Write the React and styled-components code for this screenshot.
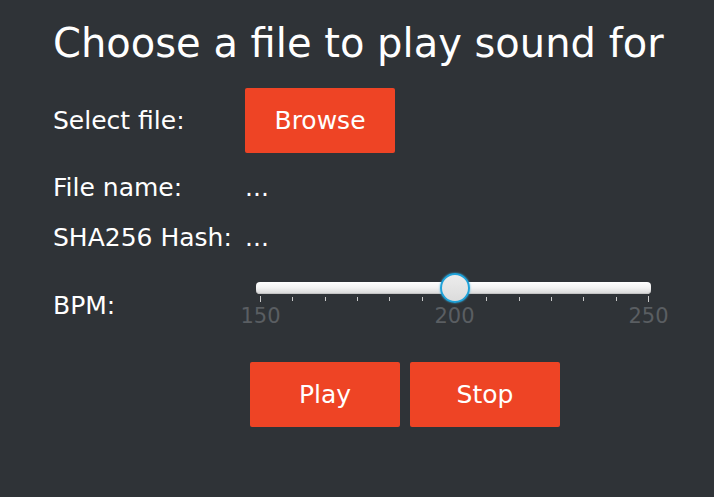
import React, { useState } from "react";
import styled, { createGlobalStyle } from "styled-components";

const GlobalStyle = createGlobalStyle`
    html, body {
        margin: 0;
        padding: 0;
        background: #2f3337;
    }
    body {
        font-family: "DejaVu Sans", "Liberation Sans", sans-serif;
        color: #ffffff;
    }
`;

const StyledPage = styled.div`
    width: 714px;
    height: 497px;
    box-sizing: border-box;
    padding: 20px 0 0 53px;
    background: #2f3337;
    display: flex;
    flex-direction: column;
`;

const StyledTitle = styled.h1`
    margin: 0;
    font-size: 40px;
    font-weight: normal;
    line-height: 47px;
    white-space: nowrap;
`;

const StyledForm = styled.div`
    display: flex;
    flex-direction: column;
    margin-top: 21px;
`;

const StyledRow = styled.div`
    display: flex;
    align-items: center;
    height: ${props => props.height}px;
    margin-top: ${props => props.gap || 0}px;
`;

const StyledLabel = styled.div`
    width: 192px;
    flex: none;
    font-size: 25px;
    white-space: nowrap;
`;

const StyledValue = styled.div`
    font-size: 25px;
`;

const StyledButton = styled.button`
    width: 150px;
    height: 65px;
    border: none;
    border-radius: 2px;
    background: #ee4425;
    color: #ffffff;
    font-family: "DejaVu Sans", "Liberation Sans", sans-serif;
    font-size: 25px;
    padding: 0;
    cursor: pointer;
`;

const StyledButtonRow = styled.div`
    display: flex;
    gap: 10px;
    margin: 22px 0 0 197px;
`;

const StyledSlider = styled.div`
    position: relative;
    width: 395px;
    height: 70px;
    margin-left: 11px;
    align-self: flex-start;
`;

const StyledTrack = styled.div`
    position: absolute;
    left: 0;
    right: 0;
    top: 12px;
    height: 12px;
    border-radius: 4px;
    background: linear-gradient(#ffffff 0%, #f2f2f2 50%, #d6d6d6 100%);
    box-shadow: inset 0 -1px 0 #c4c4c4;
`;

const StyledThumb = styled.div`
    position: absolute;
    top: 3px;
    width: 26px;
    height: 26px;
    border-radius: 50%;
    border: 2px solid #1fa2d9;
    background: linear-gradient(#ececec, #dcdcdc);
    box-shadow: 0 0 2px #3fb4e6;
    transform: translateX(-50%);
`;

const StyledTicks = styled.div`
    position: absolute;
    left: 4px;
    right: 2px;
    top: 26px;
    display: flex;
    justify-content: space-between;
    align-items: flex-start;
`;

const StyledTick = styled.div`
    width: 1px;
    height: ${props => props.major ? 6 : 4}px;
    margin-top: ${props => props.major ? 0 : 1}px;
    background: #c9c9c9;
`;

const StyledTickLabels = styled.div`
    position: absolute;
    left: 4px;
    right: 2px;
    top: 34px;
    display: flex;
    justify-content: space-between;
`;

const StyledTickLabel = styled.div`
    width: 1px;
    display: flex;
    justify-content: center;
    font-size: 21px;
    line-height: 24px;
    color: #5a5e62;
`;

const BpmSlider = (props) => {
    const { min, max, value } = props;
    const ticks = Array.from({ length: 13 }, (_, i) => i);
    const pct = (value - min) / (max - min);
    const left = 4 + pct * (395 - 6);

    return (<StyledSlider>
        <StyledTrack />
        <StyledTicks>
            {ticks.map(i => <StyledTick key={i} major={i % 6 === 0} />)}
        </StyledTicks>
        <StyledTickLabels>
            {[min, (min + max) / 2, max].map(v => <StyledTickLabel key={v}>{v}</StyledTickLabel>)}
        </StyledTickLabels>
        <StyledThumb style={{ left: `${left}px` }} />
    </StyledSlider>);
};

const App = () => {
    const [ bpm ] = useState(200);

    return (<StyledPage>
        <GlobalStyle />
        <StyledTitle>Choose a file to play sound for</StyledTitle>
        <StyledForm>
            <StyledRow height={65}>
                <StyledLabel>Select file:</StyledLabel>
                <StyledButton>Browse</StyledButton>
            </StyledRow>
            <StyledRow height={30} gap={19}>
                <StyledLabel>File name:</StyledLabel>
                <StyledValue>...</StyledValue>
            </StyledRow>
            <StyledRow height={30} gap={20}>
                <StyledLabel>SHA256 Hash:</StyledLabel>
                <StyledValue>...</StyledValue>
            </StyledRow>
            <StyledRow height={70} gap={18}>
                <StyledLabel>BPM:</StyledLabel>
                <BpmSlider min={150} max={250} value={bpm} />
            </StyledRow>
        </StyledForm>
        <StyledButtonRow>
            <StyledButton>Play</StyledButton>
            <StyledButton>Stop</StyledButton>
        </StyledButtonRow>
    </StyledPage>);
};

export default App;
